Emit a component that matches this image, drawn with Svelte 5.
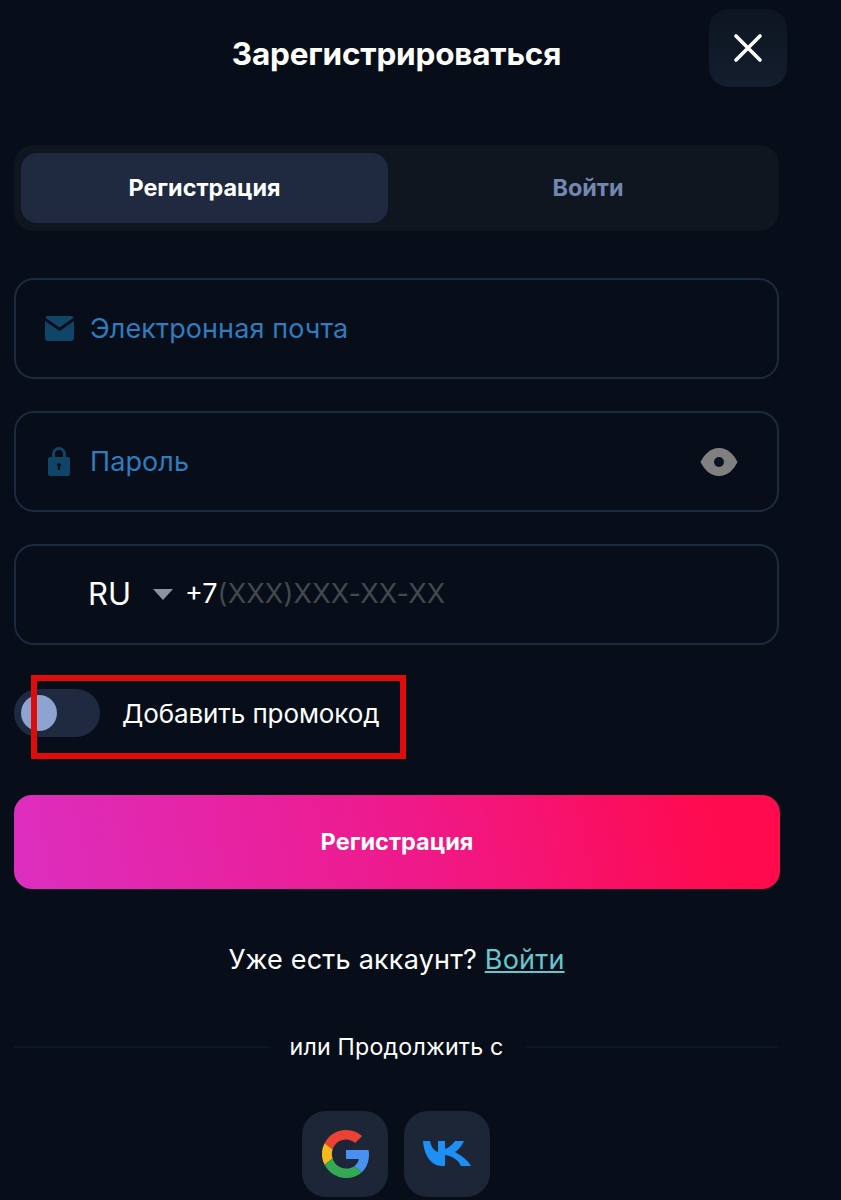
<script>
  const fields = [
    { icon: 'mail', label: 'Электронная почта' },
    { icon: 'lock', label: 'Пароль', eye: true }
  ];
</script>

<main class="page">
  <header class="head">
    <span></span>
    <h1>Зарегистрироваться</h1>
    <button class="close" aria-label="Закрыть">
      <svg width="30" height="30" viewBox="0 0 30 30"><path d="M3 3 27 27M27 3 3 27" stroke="#fff" stroke-width="3.6" stroke-linecap="round" /></svg>
    </button>
  </header>

  <div class="tabs">
    <div class="tab active">Регистрация</div>
    <div class="tab">Войти</div>
  </div>

  <div class="fields">
    {#each fields as f}
      <div class="field">
        <span class="ficon">
          {#if f.icon === 'mail'}
            <svg width="29" height="25" viewBox="0 0 29 25"><path d="M3 0h23a3 3 0 0 1 2.700 1.700L14.500 11.500.3 1.700A3 3 0 0 1 3 0Z" fill="#104568"/><path d="M0 5 14.500 15 29 5v17a3 3 0 0 1-3 3H3a3 3 0 0 1-3-3Z" fill="#104568"/></svg>
          {:else}
            <svg class="lock" width="24" height="30" viewBox="0 0 24 30"><path fill-rule="evenodd" d="M5 11V8a7 7 0 0 1 14 0v3h2a2 2 0 0 1 2 2v15a2 2 0 0 1-2 2H3a2 2 0 0 1-2-2V13a2 2 0 0 1 2-2Zm3 0h8V8a4 4 0 0 0-8 0Zm4 6a2 2 0 0 0-1 3.700V24h2v-3.300A2 2 0 0 0 12 17Z" fill="#104568"/></svg>
          {/if}
        </span>
        <span class="ph">{f.label}</span>
        {#if f.eye}
          <svg class="eye" width="38" height="30" viewBox="0 0 38 30"><path d="M19 1C28 1 34 8 37.500 15 34 22 28 29 19 29S4 22 .5 15C4 8 10 1 19 1Z" fill="#808080"/><circle cx="19" cy="15" r="5" fill="#0a1524"/></svg>
        {/if}
      </div>
    {/each}
    <div class="field phone">
      <span class="code">RU</span>
      <svg class="caret" width="20" height="11" viewBox="0 0 20 11"><path d="M0 0h20L10 11Z" fill="#8b93a1"/></svg>
      <span class="num">+7<span class="mask">(XXX)XXX-XX-XX</span></span>
    </div>
  </div>

  <div class="promo">
    <span class="switch"><span class="knob"></span></span>
    <span class="promo-label">Добавить промокод</span>
    <span class="mark"></span>
  </div>

  <button class="submit">Регистрация</button>

  <p class="have">Уже есть аккаунт? <a href="#login">Войти</a></p>

  <div class="or"><span>или Продолжить с</span></div>

  <div class="social">
    <button class="soc" aria-label="Google">
      <svg class="g" width="48" height="48" viewBox="0 0 48 48">
        <path fill="#ea4335" d="M24 9.500c3.500 0 6.700 1.300 9.200 3.400l6.900-6.900C35.900 2.200 30.300 0 24 0 14.600 0 6.500 5.400 2.600 13.200l8 6.200C12.500 13.600 17.800 9.500 24 9.500Z"/>
        <path fill="#4a90f0" d="M47 24.500c0-1.600-.2-3.200-.4-4.500H24v9h12.900c-.6 3-2.200 5.500-4.700 7.200l7.700 6C44.400 37.900 47 31.800 47 24.500Z"/>
        <path fill="#f5bb1d" d="M10.600 28.600A14.400 14.400 0 0 1 10.600 19.400l-8-6.200a24 24 0 0 0 0 21.600Z"/>
        <path fill="#34a853" d="M24 48c6.500 0 11.900-2.100 15.900-5.800l-7.700-6c-2.200 1.400-4.900 2.300-8.200 2.300-6.200 0-11.500-4.100-13.400-9.900l-8 6.200C6.500 42.600 14.600 48 24 48Z"/>
      </svg>
    </button>
    <button class="soc" aria-label="VK">
      <svg width="48" height="26" viewBox="0 0 48 26"><path fill="#1d8ff5" d="M0 0H7C8 5 10 9 15 11V0H22V8C25 7 29 4 32 0H41C39 5 35 9 32 11 36 13 45 19 48 25H38C36 20 30 15 22 14V25H19C8 25 1 14 0 0Z"/></svg>
    </button>
  </div>
</main>

<style>
  :global(body) {
    margin: 0;
    background: #070e19;
  }
  .page {
    box-sizing: border-box;
    width: 841px;
    height: 1200px;
    overflow: hidden;
    padding: 9px 62px 0 14px;
    background: #070e19;
    font-family: Inter, "Noto Sans", sans-serif;
    color: #fff;
  }
  button {
    border: 0;
    font: inherit;
    color: inherit;
    padding: 0;
  }
  .head {
    display: grid;
    grid-template-columns: 1fr auto 1fr;
    align-items: center;
    height: 78px;
  }
  h1 {
    margin: 0;
    font-size: 31.500px;
    font-weight: 700;
    letter-spacing: -0.2px;
    white-space: nowrap;
    position: relative;
    top: 5px;
  }
  .close {
    justify-self: end;
    width: 78px;
    height: 78px;
    margin-right: -8px;
    border-radius: 20px;
    background: linear-gradient(#0d1520, #131e2e);
    display: flex;
    align-items: center;
    justify-content: center;
  }
  .tabs {
    display: grid;
    grid-template-columns: 367px 1fr;
    column-gap: 9px;
    height: 86px;
    box-sizing: border-box;
    margin-top: 58px;
    padding: 8px 0 8px 7px;
    border-radius: 20px;
    background: #0f1620;
  }
  .tab {
    display: flex;
    align-items: center;
    justify-content: center;
    box-sizing: border-box;
    padding-bottom: 2px;
    border-radius: 16px;
    font-size: 23.400px;
    font-weight: 700;
    color: #7288b0;
  }
  .tab.active {
    background: #1f2a40;
    color: #fff;
  }
  .fields {
    display: flex;
    flex-direction: column;
    gap: 32px;
    margin-top: 47px;
  }
  .field {
    box-sizing: border-box;
    height: 101px;
    display: flex;
    align-items: center;
    padding: 0 39px 0 28px;
    border: 2px solid #1b2a3e;
    border-radius: 20px;
  }
  .ficon {
    width: 30px;
    display: flex;
    justify-content: center;
    margin-right: 16px;
  }
  .lock {
    position: relative;
    top: -1px;
  }
  .ph {
    font-size: 27px;
    color: #2f7cbf;
    letter-spacing: 0.1px;
  }
  .eye {
    margin-left: auto;
  }
  .phone {
    padding-left: 72px;
  }
  .code {
    font-size: 31px;
    color: #fff;
    margin-bottom: 3px;
  }
  .caret {
    margin-left: 22px;
    margin-right: 12px;
  }
  .num {
    font-size: 27px;
    color: #fff;
    margin-bottom: 2px;
  }
  .mask {
    color: #45484d;
    letter-spacing: 0.2px;
  }
  .promo {
    position: relative;
    display: flex;
    align-items: center;
    gap: 22px;
    height: 48px;
    margin-top: 44px;
  }
  .switch {
    width: 86px;
    height: 48px;
    border-radius: 24px;
    background: #1f2a40;
    display: flex;
    align-items: center;
    padding-left: 7px;
    box-sizing: border-box;
  }
  .knob {
    width: 36px;
    height: 36px;
    border-radius: 50%;
    background: #8ea3cf;
  }
  .promo-label {
    font-size: 26px;
    color: #fff;
    letter-spacing: -0.1px;
  }
  .mark {
    position: absolute;
    left: 17px;
    top: -14px;
    width: 375px;
    height: 84px;
    box-sizing: border-box;
    border: 6px solid #e00c0c;
  }
  .submit {
    display: block;
    width: 766px;
    height: 94px;
    margin-top: 58px;
    padding-bottom: 2px;
    border-radius: 18px;
    background: linear-gradient(78deg, #dc2fc0 0%, #ee1a8c 50%, #ff0a4d 92%);
    font-size: 23.500px;
    font-weight: 700;
  }
  .have {
    margin: 53px 0 0;
    text-align: center;
    font-size: 27px;
    line-height: 36px;
    letter-spacing: 0.2px;
    color: #fff;
  }
  .have a {
    color: #66c7cf;
  }
  .or {
    display: flex;
    align-items: center;
    justify-content: center;
    margin-top: 53px;
    height: 32px;
    background: linear-gradient(#0a1828, #0a1828) center / 100% 2px no-repeat;
  }
  .or span {
    padding: 0 21px;
    background: #070e19;
    font-size: 23.200px;
    letter-spacing: 0.2px;
  }
  .social {
    display: flex;
    justify-content: center;
    gap: 16px;
    margin-top: 48px;
    transform: translateX(-1px);
  }
  .soc {
    width: 86px;
    height: 86px;
    border-radius: 24px;
    background: #1c2637;
    display: flex;
    align-items: center;
    justify-content: center;
  }
  .g {
    position: relative;
    left: 1px;
  }
</style>
